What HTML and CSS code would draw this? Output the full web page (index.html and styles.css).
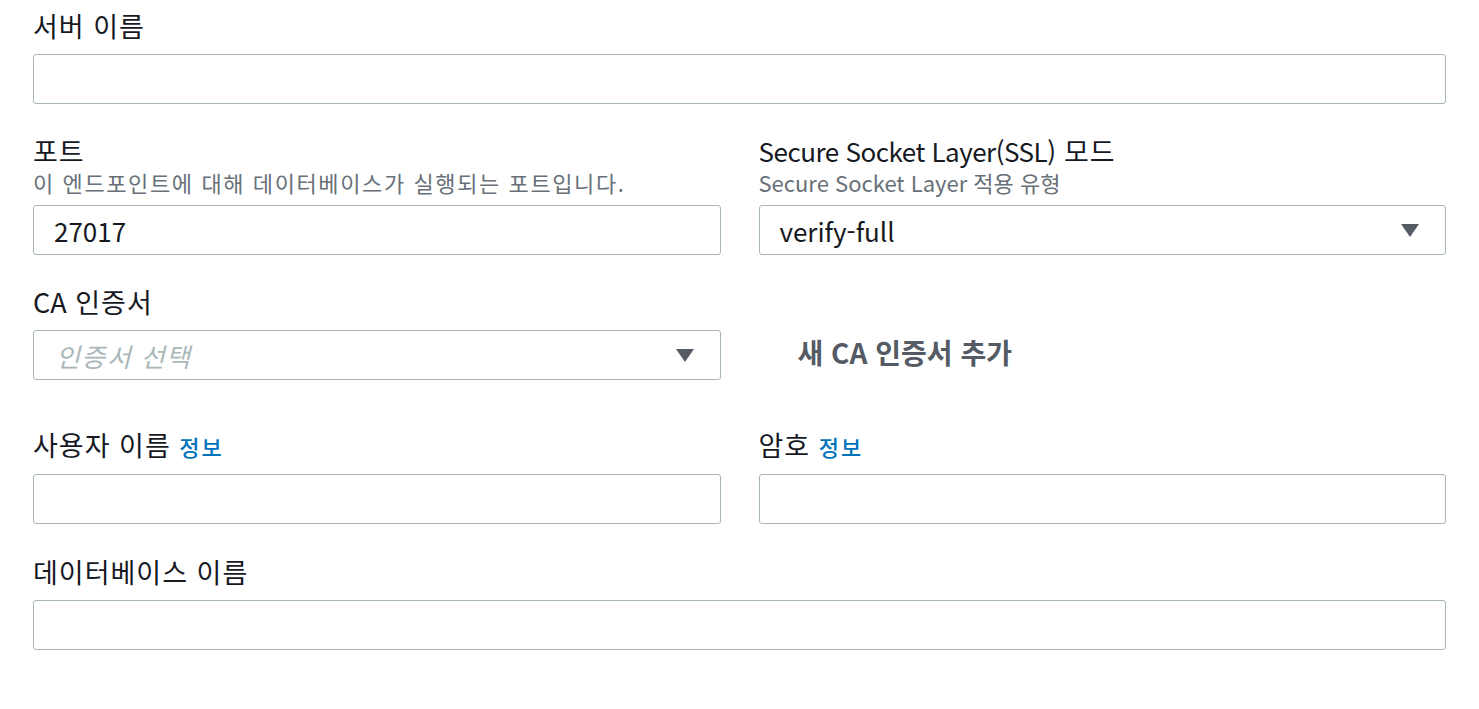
FILE: index.html
```html
<!DOCTYPE html>
<html lang="ko">
<head>
<meta charset="utf-8">
<link rel="stylesheet" href="styles.css">
</head>
<body>
<div class="form">
  <div class="row">
    <div class="field full">
      <div class="label">서버 이름</div>
      <div class="input"></div>
    </div>
  </div>
  <div class="row two">
    <div class="field">
      <div class="label with-desc">포트</div>
      <div class="desc">이 엔드포인트에 대해 데이터베이스가 실행되는 포트입니다.</div>
      <div class="input"><span class="value">27017</span></div>
    </div>
    <div class="field">
      <div class="label with-desc"><span class="latin">Secure Socket Layer(SSL)</span> 모드</div>
      <div class="desc plain">Secure Socket Layer 적용 유형</div>
      <div class="input select"><span class="value">verify-full</span><span class="caret"></span></div>
    </div>
  </div>
  <div class="row two ca">
    <div class="field">
      <div class="label"><span class="latin-ca">CA</span> 인증서</div>
      <div class="input select"><span class="placeholder">인증서 선택</span><span class="caret"></span></div>
    </div>
    <div class="field action">
      <span class="add-btn">새 CA 인증서 추가</span>
    </div>
  </div>
  <div class="row two">
    <div class="field">
      <div class="label">사용자 이름 <a class="info">정보</a></div>
      <div class="input"></div>
    </div>
    <div class="field">
      <div class="label">암호 <a class="info">정보</a></div>
      <div class="input"></div>
    </div>
  </div>
  <div class="row last">
    <div class="field full">
      <div class="label">데이터베이스 이름</div>
      <div class="input"></div>
    </div>
  </div>
</div>
</body>
</html>
```
FILE: styles.css
```css
html, body {
  margin: 0;
  padding: 0;
  background: #ffffff;
}
body {
  font-family: "Noto Sans CJK KR", "Noto Sans", sans-serif;
  color: #16191f;
}
.form {
  padding: 9px 33px 0 33px;
  display: flex;
  flex-direction: column;
  gap: 30px;
}
.row.two {
  display: grid;
  grid-template-columns: 1fr 1fr;
  column-gap: 38px;
}
.row.ca {
  margin-bottom: 18px;
}
.row.last {
  margin-top: 1px;
}
.field {
  display: flex;
  flex-direction: column;
}
.label {
  font-size: 27px;
  line-height: 34px;
  letter-spacing: 1px;
  margin-bottom: 11px;
  color: #16191f;
  white-space: nowrap;
}
.label.with-desc {
  line-height: 32px;
  margin-top: 1px;
  margin-bottom: 1px;
}
.latin {
  font-size: 26px;
  letter-spacing: -0.5px;
}
.latin-ca {
  letter-spacing: 0;
}
.desc {
  font-size: 22px;
  line-height: 28px;
  letter-spacing: 1.6px;
  color: #687078;
  margin-bottom: 9px;
  white-space: nowrap;
}
.desc.plain {
  letter-spacing: 0;
}
.info {
  font-size: 22px;
  letter-spacing: 2px;
  color: #0073bb;
  font-weight: 500;
}
.input {
  box-sizing: border-box;
  height: 50px;
  border: 1px solid #aab7b8;
  border-radius: 3px;
  display: flex;
  align-items: center;
  padding: 0 26px 0 20px;
}
.value {
  font-size: 26px;
  color: #16191f;
}
.placeholder {
  font-size: 26px;
  letter-spacing: 1.4px;
  font-style: italic;
  color: #aab7b8;
  padding-left: 2px;
}
.select {
  justify-content: space-between;
}
.caret {
  width: 0;
  height: 0;
  border-left: 9px solid transparent;
  border-right: 9px solid transparent;
  border-top: 13px solid #545b64;
}
.action {
  justify-content: flex-end;
}
.add-btn {
  height: 50px;
  display: flex;
  align-items: center;
  padding-left: 39px;
  padding-bottom: 6px;
  box-sizing: border-box;
  font-size: 28px;
  font-weight: 700;
  color: #545b64;
}
```
